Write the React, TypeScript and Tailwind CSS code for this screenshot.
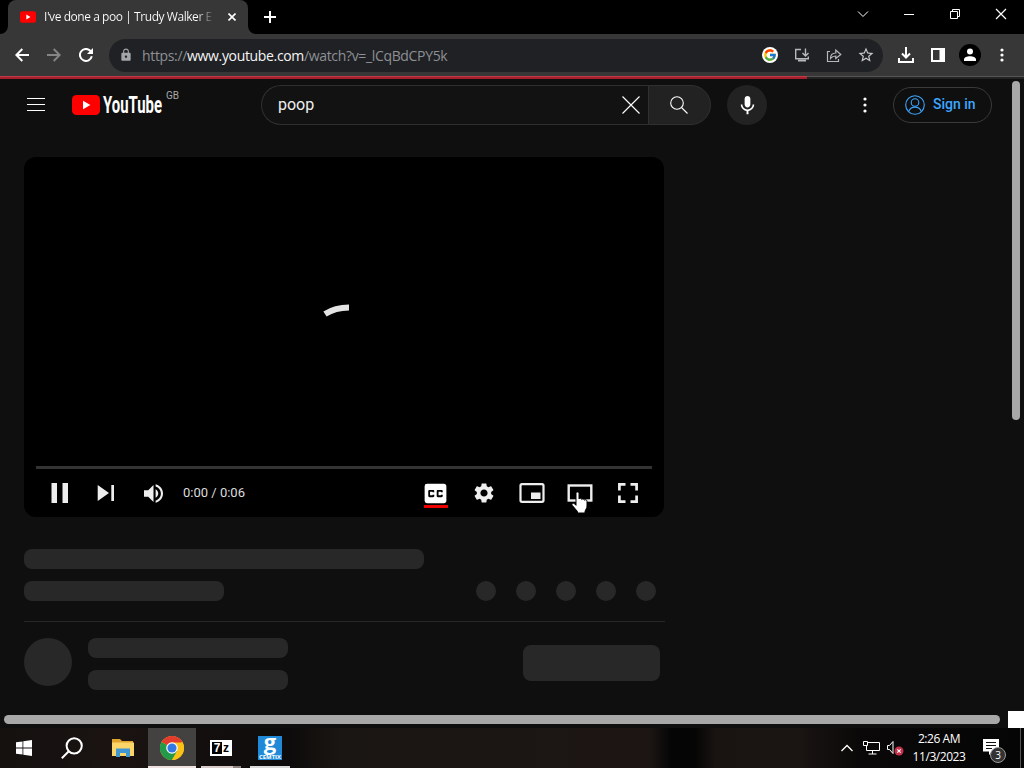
import React from 'react';
import { FcGoogle } from 'react-icons/fc';
import { MdClosedCaption, MdLock, MdMic, MdSettings, MdStarBorder } from 'react-icons/md';

interface IconBoxProps {
    children: React.ReactNode;
    className?: string;
}

const ToolbarIcon = ({ children, className = 'text-white' }: IconBoxProps) => (
    <div className={`flex h-8 w-8 shrink-0 items-center justify-center ${className}`}>{children}</div>
);

const WindowButton = ({ children }: IconBoxProps) => (
    <div className="flex h-7 w-[46px] items-center justify-center">
        <svg width="12" height="12" viewBox="0 0 12 12" fill="none" stroke="#fff" strokeWidth="1">{children}</svg>
    </div>
);

const PlayerButton = ({ children }: IconBoxProps) => (
    <div className="relative flex h-12 w-12 shrink-0 items-center justify-center text-[#eee]">{children}</div>
);

const YouTubeBadge = ({ className }: { className: string }) => (
    <svg className={className} viewBox="0 0 28 20">
        <rect width="28" height="20" rx="4.5" fill="#f00" />
        <path d="M11 5.8 18.4 10 11 14.2z" fill="#fff" />
    </svg>
);

const TabStrip = () => (
    <div className="flex h-[34px] shrink-0 bg-black">
        <svg className="w-2 self-end" height="8" viewBox="0 0 8 8"><path d="M8 0v8H0a8 8 0 0 0 8-8" fill="#373737" /></svg>
        <div className="flex w-[240px] items-center rounded-t-lg bg-[#373737] pl-3">
            <YouTubeBadge className="h-4 w-4" />
            <div className="ml-2 w-[170px] whitespace-nowrap bg-gradient-to-r from-white from-90% to-transparent bg-clip-text text-[12px] tracking-[-0.44px] text-transparent">
                I've done a poo | Trudy Walker E
            </div>
            <svg className="ml-[14px]" width="8" height="8" viewBox="0 0 8 8" stroke="#fff" strokeWidth="1.6"><path d="m.5.5 7 7m0-7-7 7" /></svg>
        </div>
        <svg className="w-2 self-end" height="8" viewBox="0 0 8 8"><path d="M0 0v8h8a8 8 0 0 1-8-8" fill="#373737" /></svg>
        <div className="flex w-7 items-center justify-center">
            <svg width="12" height="12" viewBox="0 0 12 12" stroke="#fff" strokeWidth="2"><path d="M6 0v12M0 6h12" /></svg>
        </div>
        <div className="ml-auto flex">
            <WindowButton><path d="m1 3.500 5 5 5-5" /></WindowButton>
            <WindowButton><path d="M1 6.500h10" /></WindowButton>
            <WindowButton><path d="M1.500 3.500h7v7h-7zM3.500 3.500v-2h7v7h-2" /></WindowButton>
            <WindowButton><path d="m1 1 10 10M11 1 1 11" strokeWidth="1.200" /></WindowButton>
        </div>
    </div>
);

const Toolbar = () => (
    <div className="flex h-[42px] shrink-0 items-center bg-[#373737] px-1.5">
        <ToolbarIcon>
            <svg width="14" height="14" viewBox="0 0 14 14" fill="none" stroke="currentColor" strokeWidth="2"><path d="M14 7H1.500M7.300 1 1.300 7l6 6" /></svg>
        </ToolbarIcon>
        <ToolbarIcon className="text-[#858585]">
            <svg width="14" height="14" viewBox="0 0 14 14" fill="none" stroke="currentColor" strokeWidth="1.900"><path d="M0 7h12.500M6.700 1l6 6-6 6" /></svg>
        </ToolbarIcon>
        <ToolbarIcon>
            <svg width="14" height="14" viewBox="0 0 14 14" fill="none" stroke="currentColor" strokeWidth="2">
                <path d="M12.800 8.300A6 6 0 1 1 11.300 2.800L12.500 4" /><path d="M14 0v6H8z" fill="currentColor" stroke="none" />
            </svg>
        </ToolbarIcon>
        <div className="ml-[7px] flex h-[33px] w-[774px] items-center rounded-full bg-[#202124] pl-[10px] pr-[1px]">
            <MdLock size={14} className="text-[#a2a5a9]" />
            <span className="ml-[9px] text-[14px] tracking-[-0.34px] text-[#8d9094]">
                https://<span className="text-[#f5f5f5]">www.youtube.com</span>/watch?v=_lCqBdCPY5k
            </span>
            <div className="ml-auto flex">
                <ToolbarIcon>
                    <span className="flex h-4 w-4 items-center justify-center rounded-full bg-white"><FcGoogle size={14} /></span>
                </ToolbarIcon>
                <ToolbarIcon className="text-[#b5b8bc]">
                    <svg width="16" height="16" viewBox="0 0 16 16" fill="none" stroke="currentColor" strokeWidth="1.400">
                        <path d="M7 2.500H1.700v9.300h12.600V9.500M11.500 1.500v7M8.500 6l3 3 3-3" /><path d="M4 13.500h8" strokeWidth="2" />
                    </svg>
                </ToolbarIcon>
                <ToolbarIcon className="text-[#b5b8bc]">
                    <svg width="16" height="16" viewBox="0 0 16 16" fill="none" stroke="currentColor" strokeWidth="1.200">
                        <path d="M4 4.500H1.500v10h11V12M4.500 11.500c0-3.500 2-5.500 5.300-5.500V3l5 4.500-5 4V9c-2.300 0-3.800.6-5.300 2.500z" />
                    </svg>
                </ToolbarIcon>
                <ToolbarIcon className="text-[#c5c7ca]"><MdStarBorder size={18} /></ToolbarIcon>
            </div>
        </div>
        <div className="ml-auto flex">
            <ToolbarIcon>
                <svg width="16" height="16" viewBox="0 0 16 16" fill="none" stroke="currentColor" strokeWidth="2">
                    <path d="M8 0v10M4 6.500l4 4 4-4M1 11v4h14v-4" />
                </svg>
            </ToolbarIcon>
            <ToolbarIcon>
                <svg width="14" height="14" viewBox="0 0 14 14"><path d="M0 0h14v14H0zM2 2v10h6.500V2z" fill="#fff" fillRule="evenodd" /></svg>
            </ToolbarIcon>
            <ToolbarIcon>
                <svg width="22" height="22" viewBox="0 0 22 22">
                    <circle cx="11" cy="11" r="11" fill="#000" />
                    <circle cx="11" cy="7.500" r="3" fill="#fff" /><path d="M5 17v-1.500c0-4.500 12-4.500 12 0V17z" fill="#fff" />
                </svg>
            </ToolbarIcon>
            <ToolbarIcon>
                <svg width="4" height="14" viewBox="0 0 4 14" fill="#fff"><circle cx="2" cy="2" r="1.600" /><circle cx="2" cy="7" r="1.600" /><circle cx="2" cy="12" r="1.600" /></svg>
            </ToolbarIcon>
        </div>
    </div>
);

const Masthead = () => (
    <header className="flex h-[52px] items-center pl-[27px] pr-8 font-[Roboto,sans-serif]">
        <svg className="-mt-[2px]" width="18" height="14" viewBox="0 0 18 14" stroke="#fff" strokeWidth="1"><path d="M0 1.500h18M0 7.500h18M0 13.500h18" /></svg>
        <div className="ml-[27px] flex">
            <YouTubeBadge className="h-5 w-7" />
            <svg className="ml-[3px] overflow-visible" width="60" height="20" viewBox="0 0 60 20">
                <text x="0" y="18.300" fill="#fff" fontSize="24" fontWeight="700" textLength="59" lengthAdjust="spacingAndGlyphs">YouTube</text>
            </svg>
            <span className="-mt-[5px] ml-[3px] text-[10px] leading-[12px] text-[#aaa]">GB</span>
        </div>
        <div className="ml-auto flex h-10 w-[387px] items-center justify-between rounded-l-full border border-r-0 border-[#303030] bg-[#121212] pl-4 pr-2">
            <span className="text-[16px] text-[#eee]">poop</span>
            <svg width="18" height="18" viewBox="0 0 18 18" stroke="#fff" strokeWidth="1.100"><path d="m.5.5 17 17m0-17-17 17" /></svg>
        </div>
        <div className="flex h-10 w-[63px] items-center justify-center rounded-r-full border border-[#303030] bg-[#222] pr-[2px]">
            <svg width="18" height="18" viewBox="0 0 18 18" fill="none" stroke="#fff" strokeWidth="1.100"><circle cx="7" cy="7" r="6.300" /><path d="m11.500 11.500 6 6" /></svg>
        </div>
        <div className="ml-4 flex h-10 w-10 items-center justify-center rounded-full bg-[#222] text-white">
            <MdMic size={23} />
        </div>
        <svg className="ml-24" width="4" height="16" viewBox="0 0 4 16" fill="#fff"><circle cx="2" cy="2" r="1.600" /><circle cx="2" cy="8" r="1.600" /><circle cx="2" cy="14" r="1.600" /></svg>
        <div className="ml-[26px] flex h-9 w-[99px] items-center rounded-full border border-[#3a3a3a] pl-[11px] text-[14px] font-medium text-[#3ea6ff]">
            <svg width="20" height="20" viewBox="0 0 20 20" fill="none" stroke="currentColor" strokeWidth="1.100">
                <circle cx="10" cy="10" r="9.300" /><circle cx="10" cy="7.500" r="3.800" /><path d="M3.700 16.700c1-3.300 3.500-4.600 6.300-4.600s5.300 1.300 6.300 4.600" />
            </svg>
            <span className="-mt-[2px] ml-2">Sign in</span>
        </div>
    </header>
);

const Player = () => (
    <div className="flex h-[360px] w-[640px] flex-col rounded-xl bg-black px-3">
        <div className="flex flex-1 items-center pl-[286px]">
            <svg className="-mt-[5px]" width="30" height="20" viewBox="0 0 30 20" fill="none"><path d="M3 15C10 10.500 18 8.500 27 8.500" stroke="#e4e4e4" strokeWidth="6" /></svg>
        </div>
        <div className="h-[3px] bg-[#333]" />
        <div className="flex h-12 items-center">
            <PlayerButton>
                <svg width="48" height="48" viewBox="0 0 48 48" fill="currentColor"><path d="M15.500 14h5.500v20h-5.500zM26.500 14H32v20h-5.500z" /></svg>
            </PlayerButton>
            <div className="-ml-[2px] flex w-[46px]">
                <svg width="48" height="48" viewBox="0 0 48 48" fill="currentColor" className="shrink-0 text-[#eee]"><path d="M15.700 16v16L27 24zM29.300 16h2.700v16h-2.700z" /></svg>
            </div>
            <svg width="19" height="19" viewBox="8 9.200 18 17.600" fill="#eee" className="ml-[16px]">
                <path d="M8 21h4l5 5V10l-5 5H8zM19 14v8c1.480-.68 2.500-2.230 2.500-4s-1.020-3.260-2.500-4zM19 11.290c2.890.86 5 3.540 5 6.710s-2.110 5.850-5 6.710v2.060c4.010-.91 7-4.490 7-8.770s-2.990-7.860-7-8.770z" />
            </svg>
            <span className="ml-[20px] font-[Roboto,sans-serif] text-[13px] text-[#ddd]">0:00 / 0:06</span>
            <div className="ml-auto flex">
                <PlayerButton>
                    <MdClosedCaption size={29} className="mr-[1px] text-white" />
                    <span className="absolute bottom-[9px] left-3 h-[3px] w-6 bg-[#e00]" />
                </PlayerButton>
                <PlayerButton><MdSettings size={24} /></PlayerButton>
                <PlayerButton>
                    <svg width="26" height="20" viewBox="0 0 26 20"><rect x="1.500" y="1.200" width="23" height="17.600" rx="1.500" fill="none" stroke="currentColor" strokeWidth="2.200" /><path d="M12 9.500h9.500V16H12z" fill="currentColor" /></svg>
                </PlayerButton>
                <PlayerButton>
                    <svg width="26" height="18" viewBox="0 0 26 18"><rect x="1.700" y="1.500" width="22.600" height="15" fill="none" stroke="currentColor" strokeWidth="2.400" /></svg>
                    {/* hand pointer hovering the button */}
                    <svg className="absolute left-[15px] top-[22px]" width="18" height="24" viewBox="0 0 18 24">
                        <path d="M5 2.500c0-2 3-2 3 0V8c.3-1 2.600-1 2.700.5.500-1 2.600-.8 2.700.7.500-.9 2.600-.6 2.600 1V15c0 2.500-1.500 3.500-2 5.500V22H6.500v-1.500L1.200 14.300C.2 12.800 2 11.500 3.400 12.700L5 14.300z" fill="#fff" stroke="#000" strokeWidth="1" />
                    </svg>
                </PlayerButton>
                <PlayerButton>
                    <svg width="20" height="20" viewBox="0 0 20 20" fill="none" stroke="currentColor" strokeWidth="2.700"><path d="M1.400 7.500V1.400h6.100M12.500 1.400h6.100v6.100M18.600 12.500v6.100h-6.100M7.500 18.600H1.400v-6.100" /></svg>
                </PlayerButton>
            </div>
        </div>
    </div>
);

const Skeleton = () => (
    <div className="mt-8 w-[641px]">
        <div className="h-5 w-[400px] rounded-lg bg-[#282828]" />
        <div className="mt-3 flex items-center justify-between pr-[9px]">
            <div className="h-5 w-[200px] rounded-lg bg-[#282828]" />
            <div className="flex gap-5">
                {[0, 1, 2, 3, 4].map(i => (
                    <div key={i} className="h-5 w-5 rounded-full bg-[#282828]" />
                ))}
            </div>
        </div>
        <div className="mt-5 h-px bg-[#272727]" />
        <div className="mt-4 flex">
            <div className="h-12 w-12 rounded-full bg-[#282828]" />
            <div className="ml-4 flex flex-col gap-3">
                <div className="h-5 w-[200px] rounded-lg bg-[#282828]" />
                <div className="h-5 w-[200px] rounded-lg bg-[#282828]" />
            </div>
            <div className="ml-auto mr-[5px] mt-[7px] h-9 w-[137px] rounded-lg bg-[#282828]" />
        </div>
    </div>
);

const Taskbar = () => (
    <div className="flex h-10 shrink-0 items-center bg-[linear-gradient(90deg,#14110f_0,#1a1312_120px,#0d0b0b_290px,#1a1613_340px,#1c1514_650px,#050505_672px,#060505_695px,#191312_715px,#1a1413_800px,#0a0808_860px,#050505_100%)]">
        <div className="flex h-10 w-12 items-center justify-center">
            <svg width="16" height="16" viewBox="0 0 16 16" fill="#fff"><path d="M0 2.300 6.500 1.400v6.200H0zM7.300 1.300 16 0v7.600H7.300zM0 8.400h6.500v6.200L0 13.700zM7.300 8.400H16V16l-8.700-1.300z" /></svg>
        </div>
        <div className="flex h-10 w-12 items-center justify-center">
            <svg width="22" height="22" viewBox="0 0 22 22" fill="none" stroke="#fff" strokeWidth="2"><circle cx="13.200" cy="8.800" r="7.600" /><path d="M7.800 14.300.8 21.200" /></svg>
        </div>
        <div className="flex h-10 w-[52px] items-center justify-center pl-[2px]">
            <svg width="22" height="18" viewBox="0 0 22 18">
                <path d="M0 0h8l2 2h11v3H0z" fill="#e0a32e" /><path d="M0 3.500h22V17H0z" fill="#fbd568" />
                <path d="M4 18V9.500h14V18h-4v-4H8v4z" fill="#3f96d2" />
            </svg>
        </div>
        <div className="flex h-10 w-12 flex-col items-center bg-[#444241]">
            <svg className="mt-2" width="24" height="24" viewBox="0 0 24 24">
                <circle cx="12" cy="12" r="12" fill="#fbc116" />
                <path d="M12 12 1.600 6A12 12 0 0 1 22.400 6z" fill="#e33b2e" />
                <path d="M12 12 1.600 6A12 12 0 0 0 12 24l5.200-9z" fill="#229a4a" />
                <path d="M12 6.500h10.700A12 12 0 0 1 12 24l5.200-9z" fill="#fbc116" />
                <circle cx="12" cy="12" r="5.800" fill="#fff" /><circle cx="12" cy="12" r="4.600" fill="#3478e5" />
            </svg>
            <div className="mt-auto h-[2px] w-full bg-[#eee1dd]" />
        </div>
        <div className="ml-[5px] flex h-10 w-10 flex-col items-center">
            <div className="mt-3 flex h-4 w-[22px] items-center border-2 border-white bg-white font-['Liberation_Sans',sans-serif] font-bold">
                <span className="flex h-3 w-[10px] items-center justify-center bg-black text-[12px] leading-[12px] text-white">7</span>
                <span className="flex h-3 w-2 items-center justify-center text-[12px] leading-[12px] text-black">z</span>
            </div>
            <div className="mt-auto flex h-[2px] w-full bg-[#d9cbc8]"><div className="ml-auto w-2 bg-[#8f8684]" /></div>
        </div>
        <div className="ml-[9px] flex h-10 w-10 flex-col items-center">
            <svg className="mt-2 overflow-visible" width="24" height="24" viewBox="0 0 24 24" fontFamily="Open Sans, sans-serif" fontWeight="700" fill="#fff" textAnchor="middle">
                <rect width="24" height="24" fill="#208ad8" />
                <text x="12" y="13.500" fontSize="22">g</text>
                <text x="12" y="23" fontSize="6" textLength="22" lengthAdjust="spacingAndGlyphs">CEMTIX</text>
            </svg>
            <div className="mt-auto h-[2px] w-full bg-[#d9d9d9]" />
        </div>
        <div className="ml-auto flex h-10 items-center">
            <svg width="12" height="8" viewBox="0 0 12 8" fill="none" stroke="#fff" strokeWidth="1.300"><path d="m.5 7 5.500-5.500L11.500 7" /></svg>
            <svg className="ml-[10px]" width="17" height="14" viewBox="0 0 17 14" fill="none" stroke="#fff"><path d="M5 1.500h11.500v8H3.500V5M9.500 9.500V13M5.500 13h8M.5.500h4v4h-4z" /></svg>
            <svg className="ml-[7px]" width="17" height="16" viewBox="0 0 17 16">
                <path d="M.5 5.500h2l3.500-4v12l-3.500-4h-2z" fill="none" stroke="#fff" />
                <circle cx="12" cy="11" r="4.500" fill="#c5304a" /><path d="m10.300 9.300 3.400 3.400m0-3.400-3.400 3.400" stroke="#fff" strokeWidth="1.100" />
            </svg>
            <div className="ml-[8px] w-[54px] whitespace-nowrap text-center text-[12px] leading-[18px] tracking-[-0.45px] text-white">
                <div>2:26 AM</div>
                <div>11/3/2023</div>
            </div>
            <div className="relative ml-[17px] h-7 w-[24px]">
                <svg className="mt-[5px]" width="16" height="16" viewBox="0 0 16 16"><path d="M0 0h16v12.500H9.500L6 16v-3.500H0z" fill="#fff" /><path d="M3 3.500h10M3 6.500h10M3 9.500h6" stroke="#111" /></svg>
                <span className="absolute left-[7px] top-[13px] flex h-4 w-4 items-center justify-center rounded-full border border-[#999] bg-[#333] text-[10px] text-white">3</span>
            </div>
            <div className="ml-[13px] mr-[3px] h-10 w-px bg-[#555]" />
        </div>
    </div>
);

const App = () => (
    <div className="flex h-[768px] w-[1024px] flex-col overflow-hidden bg-[#0f0f0f] font-['Open_Sans','Noto_Sans',sans-serif]">
        <TabStrip />
        <Toolbar />
        {/* page load progress */}
        <div className="flex h-[3px] shrink-0 bg-[#222]">
            <div className="w-[807px] border-t border-[#c03a48] bg-[#a5202c]" />
            <div className="flex-1 border-t border-[#555]" />
        </div>
        <main className="flex h-[632px] shrink-0">
            <div className="w-[1008px]">
                <div className="w-[1024px]"><Masthead /></div>
                <div className="mt-[26px] pl-6">
                    <Player />
                    <Skeleton />
                </div>
            </div>
            <div className="relative w-4 pl-1 pt-[2px]">
                <div className="h-[339px] w-2 rounded-full bg-[#a8a8a8]" />
            </div>
        </main>
        <div className="flex h-[17px] shrink-0 items-start justify-between pl-1">
            <div className="mt-1 h-[9px] w-[996px] rounded-full bg-[#a8a8a8]" />
            <div className="h-[17px] w-4 bg-white" />
        </div>
        <Taskbar />
    </div>
);

export default App;
